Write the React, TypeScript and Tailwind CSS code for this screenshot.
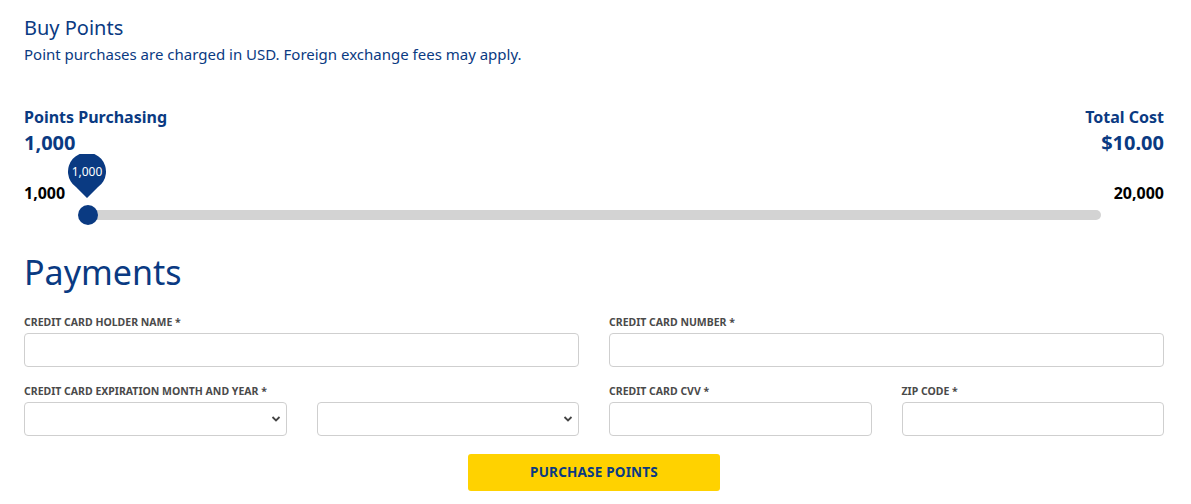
export default function App() {
  const blue = 'text-[#0a3a82]';
  return (
    <div className="w-[1191px] h-[504px] bg-white pl-[24px] pr-[27px] pt-[14px] font-['Noto_Sans',sans-serif] overflow-hidden">
      <h1 className={`text-[20px] leading-[28px] ${blue}`}>Buy Points</h1>
      <p className={`mt-[2px] text-[15px] leading-[20px] ${blue}`}>
        Point purchases are charged in USD. Foreign exchange fees may apply.
      </p>

      <div className="mt-[41px] flex justify-between">
        <div>
          <div className={`text-[16px] leading-[24px] font-bold ${blue}`}>Points Purchasing</div>
          <div className={`text-[20px] leading-[28px] font-bold ${blue}`}>1,000</div>
        </div>
        <div className="text-right">
          <div className={`text-[16px] leading-[24px] font-bold ${blue}`}>Total Cost</div>
          <div className={`text-[20px] leading-[28px] font-bold ${blue}`}>$10.00</div>
        </div>
      </div>

      <div className="mt-[24px] flex justify-between text-[16px] leading-[24px] font-bold text-black">
        <span>1,000</span>
        <span>20,000</span>
      </div>
      <div className="relative mt-[5px] ml-[56px] mr-[63px] h-[10px] rounded-full bg-[#d3d3d3]">
        <div className="absolute left-[-2px] top-[-5px] w-[20px] h-[20px] rounded-full bg-[#0a3a82]" />
        <div className="absolute left-[-12px] top-[-56px] w-[38px] h-[44px]">
          <svg width="38" height="44" viewBox="0 0 38 44">
            <path d="M19 44 L8 33 A19 19 0 1 1 30 33 Z" fill="#0a3a82" />
          </svg>
          <span className="absolute left-0 top-[10px] w-[38px] text-center text-[12px] leading-[16px] text-white">
            1,000
          </span>
        </div>
      </div>

      <h2 className={`mt-[32px] text-[34px] leading-[40px] ${blue}`}>Payments</h2>

      <div className="mt-[23px] grid grid-cols-2 gap-x-[30px]">
        <Field label="CREDIT CARD HOLDER NAME *">
          <input className="w-full h-[34px] rounded-[4px] border border-[#cfcfcf] bg-white" />
        </Field>
        <Field label="CREDIT CARD NUMBER *">
          <input className="w-full h-[34px] rounded-[4px] border border-[#cfcfcf] bg-white" />
        </Field>
      </div>

      <div className="mt-[17px] grid grid-cols-2 gap-x-[30px]">
        <div>
          <Label text="CREDIT CARD EXPIRATION MONTH AND YEAR *" />
          <div className="mt-[4px] grid grid-cols-2 gap-x-[30px]">
            <Select />
            <Select />
          </div>
        </div>
        <div className="grid grid-cols-2 gap-x-[30px]">
          <Field label="CREDIT CARD CVV *">
            <input className="w-full h-[34px] rounded-[4px] border border-[#cfcfcf] bg-white" />
          </Field>
          <Field label="ZIP CODE *">
            <input className="w-full h-[34px] rounded-[4px] border border-[#cfcfcf] bg-white" />
          </Field>
        </div>
      </div>

      <div className="mt-[18px] flex justify-center">
        <button className="w-[252px] h-[37px] rounded-[3px] bg-[#ffd200] text-[13.5px] font-bold text-[#0a3a82] tracking-[0.2px]">
          PURCHASE POINTS
        </button>
      </div>
    </div>
  );
}

function Label({ text }: { text: string }) {
  return (
    <div className="text-[10.5px] leading-[14px] font-bold text-[#4a4a4a]">{text}</div>
  );
}

function Field({ label, children }: { label: string; children: React.ReactNode }) {
  return (
    <div>
      <Label text={label} />
      <div className="mt-[4px]">{children}</div>
    </div>
  );
}

function Select() {
  return (
    <div className="relative">
      <select className="w-full h-[34px] appearance-none rounded-[4px] border border-[#cfcfcf] bg-white" />
      <svg
        className="absolute right-[6px] top-[13px]"
        width="10"
        height="8"
        viewBox="0 0 10 8"
      >
        <path d="M1.5 2 L5 5.5 L8.5 2" fill="none" stroke="#444" strokeWidth="1.8" />
      </svg>
    </div>
  );
}
